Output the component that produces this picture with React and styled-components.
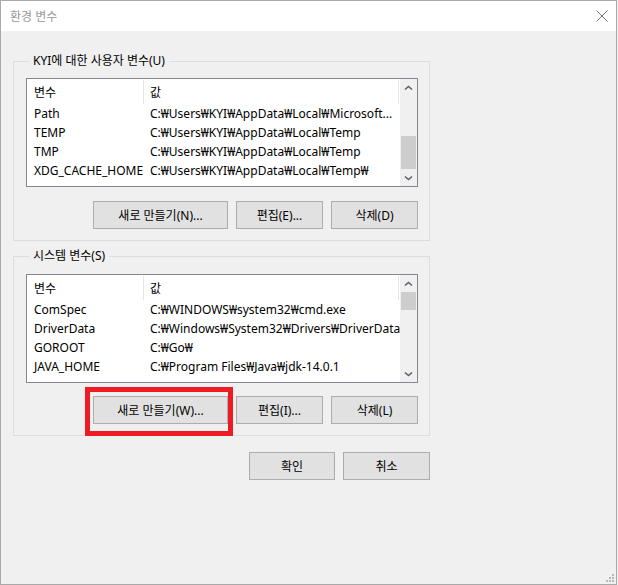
import React from "react";
import styled, { createGlobalStyle } from "styled-components";

const GlobalStyle = createGlobalStyle`
  html, body {
    margin: 0;
    padding: 0;
    background: #f0f0f0;
  }
  body {
    font-family: "Noto Sans", "Noto Sans CJK KR", sans-serif;
    font-size: 12px;
    color: #000;
  }
`;

const Window = styled.div`
  position: relative;
  width: 617px;
  height: 585px;
  box-sizing: border-box;
  border: 1px solid #a9a9a9;
  background: #f0f0f0;
  display: flex;
  flex-direction: column;
`;

const TitleBar = styled.div`
  height: 30px;
  flex: none;
  background: #fff;
  display: flex;
  align-items: center;
  justify-content: space-between;
  padding: 0 8px 0 9px;
  color: #999;
  font-size: 12px;
`;

const Body = styled.div`
  padding: 22px 0 0 12px;
  display: flex;
  flex-direction: column;
  width: 417px;
`;

const Group = styled.fieldset`
  margin: ${(p) => p.$top || 0}px 0 0 0;
  padding: 0 11px 11px 12px;
  border: 1px solid #dcdcdc;
  min-width: 0;
  box-sizing: border-box;
  width: 417px;
`;

const Legend = styled.legend`
  margin-left: 3px;
  padding: 0 4px;
  line-height: 16px;
  font-size: 12px;
`;

const List = styled.div`
  margin-top: ${(p) => p.$top}px;
  height: 109px;
  box-sizing: border-box;
  border: 1px solid #828790;
  background: #fff;
  display: flex;
`;

const Table = styled.div`
  flex: 1;
  min-width: 0;
  display: flex;
  flex-direction: column;
`;

const HeaderRow = styled.div`
  height: 25px;
  display: flex;
  align-items: stretch;
`;

const HeaderCell = styled.div`
  width: ${(p) => p.$w}px;
  flex: none;
  box-sizing: border-box;
  padding-left: ${(p) => p.$pad}px;
  display: flex;
  align-items: center;
  border-right: 1px solid #e5e5e5;
  margin: 1px 0 0;
`;

const Row = styled.div`
  height: 19px;
  display: flex;
  align-items: center;
`;

const Cell = styled.div`
  width: ${(p) => (p.$w ? `${p.$w}px` : "auto")};
  flex: ${(p) => (p.$w ? "none" : "1")};
  min-width: 0;
  box-sizing: border-box;
  padding-left: ${(p) => p.$pad}px;
  white-space: nowrap;
  overflow: hidden;
`;

const ScrollBar = styled.div`
  width: 17px;
  flex: none;
  background: #f0f0f0;
  display: flex;
  flex-direction: column;
`;

const Arrow = styled.div`
  height: 17px;
  flex: none;
  display: flex;
  align-items: center;
  justify-content: center;
`;

const Track = styled.div`
  flex: 1;
  display: flex;
  flex-direction: column;
  justify-content: ${(p) => (p.$end ? "flex-end" : "flex-start")};
  align-items: center;
`;

const Thumb = styled.div`
  width: 15px;
  height: ${(p) => p.$h}px;
  background: #cdcdcd;
`;

const ButtonRow = styled.div`
  margin-top: ${(p) => p.$top}px;
  display: flex;
  justify-content: flex-end;
  gap: 8px;
`;

const Button = styled.button`
  width: ${(p) => p.$w}px;
  height: 28px;
  box-sizing: border-box;
  border: 1px solid #adadad;
  background: #e1e1e1;
  font-family: inherit;
  font-size: 12px;
  color: #000;
  padding: 0;
  cursor: default;
`;

const Highlight = styled.div`
  position: relative;
  display: flex;

  &::after {
    content: "";
    position: absolute;
    top: -9px;
    left: -8px;
    right: -5px;
    bottom: -12px;
    border: 5px solid #ed1c24;
    pointer-events: none;
  }
`;

const Grip = styled.svg`
  position: absolute;
  right: 1px;
  bottom: 1px;
`;

const Chevron = ({ down }) => (
  <svg width="9" height="6" viewBox="0 0 9 6">
    <path
      d={down ? "M1 1.5 L4.5 4.5 L8 1.5" : "M1 4.5 L4.5 1.5 L8 4.5"}
      fill="none"
      stroke="#606060"
      strokeWidth="1.6"
    />
  </svg>
);

const VarList = ({ top, rows, thumbH, thumbEnd }) => (
  <List $top={top}>
    <Table>
      <HeaderRow>
        <HeaderCell $w={117} $pad={7}>변수</HeaderCell>
        <HeaderCell $w={255} $pad={6}>값</HeaderCell>
      </HeaderRow>
      {rows.map(([name, value]) => (
        <Row key={name}>
          <Cell $w={117} $pad={7}>{name}</Cell>
          <Cell $pad={6}>{value}</Cell>
        </Row>
      ))}
    </Table>
    <ScrollBar>
      <Arrow><Chevron /></Arrow>
      <Track $end={thumbEnd}>
        <Thumb $h={thumbH} />
      </Track>
      <Arrow><Chevron down /></Arrow>
    </ScrollBar>
  </List>
);

const userVars = [
  ["Path", "C:₩Users₩KYI₩AppData₩Local₩Microsoft..."],
  ["TEMP", "C:₩Users₩KYI₩AppData₩Local₩Temp"],
  ["TMP", "C:₩Users₩KYI₩AppData₩Local₩Temp"],
  ["XDG_CACHE_HOME", "C:₩Users₩KYI₩AppData₩Local₩Temp₩"],
];

const systemVars = [
  ["ComSpec", "C:₩WINDOWS₩system32₩cmd.exe"],
  ["DriverData", "C:₩Windows₩System32₩Drivers₩DriverData"],
  ["GOROOT", "C:₩Go₩"],
  ["JAVA_HOME", "C:₩Program Files₩Java₩jdk-14.0.1"],
];

export default function App() {
  return (
    <>
      <GlobalStyle />
      <Window>
        <TitleBar>
          <span>환경 변수</span>
          <svg width="12" height="12" viewBox="0 0 12 12">
            <path d="M0.5 0.5 L11.5 11.5 M11.5 0.5 L0.5 11.5" stroke="#777" strokeWidth="1" />
          </svg>
        </TitleBar>
        <Body>
          <Group>
            <Legend>KYI에 대한 사용자 변수(U)</Legend>
            <VarList top={9} rows={userVars} thumbH={33} thumbEnd />
            <ButtonRow $top={14}>
              <Button $w={135}>새로 만들기(N)...</Button>
              <Button $w={87}>편집(E)...</Button>
              <Button $w={87}>삭제(D)</Button>
            </ButtonRow>
          </Group>
          <Group $top={7}>
            <Legend>시스템 변수(S)</Legend>
            <VarList top={10} rows={systemVars} thumbH={18} />
            <ButtonRow $top={13}>
              <Highlight>
                <Button $w={135}>새로 만들기(W)...</Button>
              </Highlight>
              <Button $w={87}>편집(I)...</Button>
              <Button $w={87}>삭제(L)</Button>
            </ButtonRow>
          </Group>
          <ButtonRow $top={16}>
            <Button $w={86}>확인</Button>
            <Button $w={87}>취소</Button>
          </ButtonRow>
        </Body>
        <Grip width="10" height="10" viewBox="0 0 10 10">
          <g fill="#b8b8b8">
            <rect x="7" y="1" width="2" height="2" />
            <rect x="4" y="4" width="2" height="2" />
            <rect x="7" y="4" width="2" height="2" />
            <rect x="1" y="7" width="2" height="2" />
            <rect x="4" y="7" width="2" height="2" />
            <rect x="7" y="7" width="2" height="2" />
          </g>
        </Grip>
      </Window>
    </>
  );
}
